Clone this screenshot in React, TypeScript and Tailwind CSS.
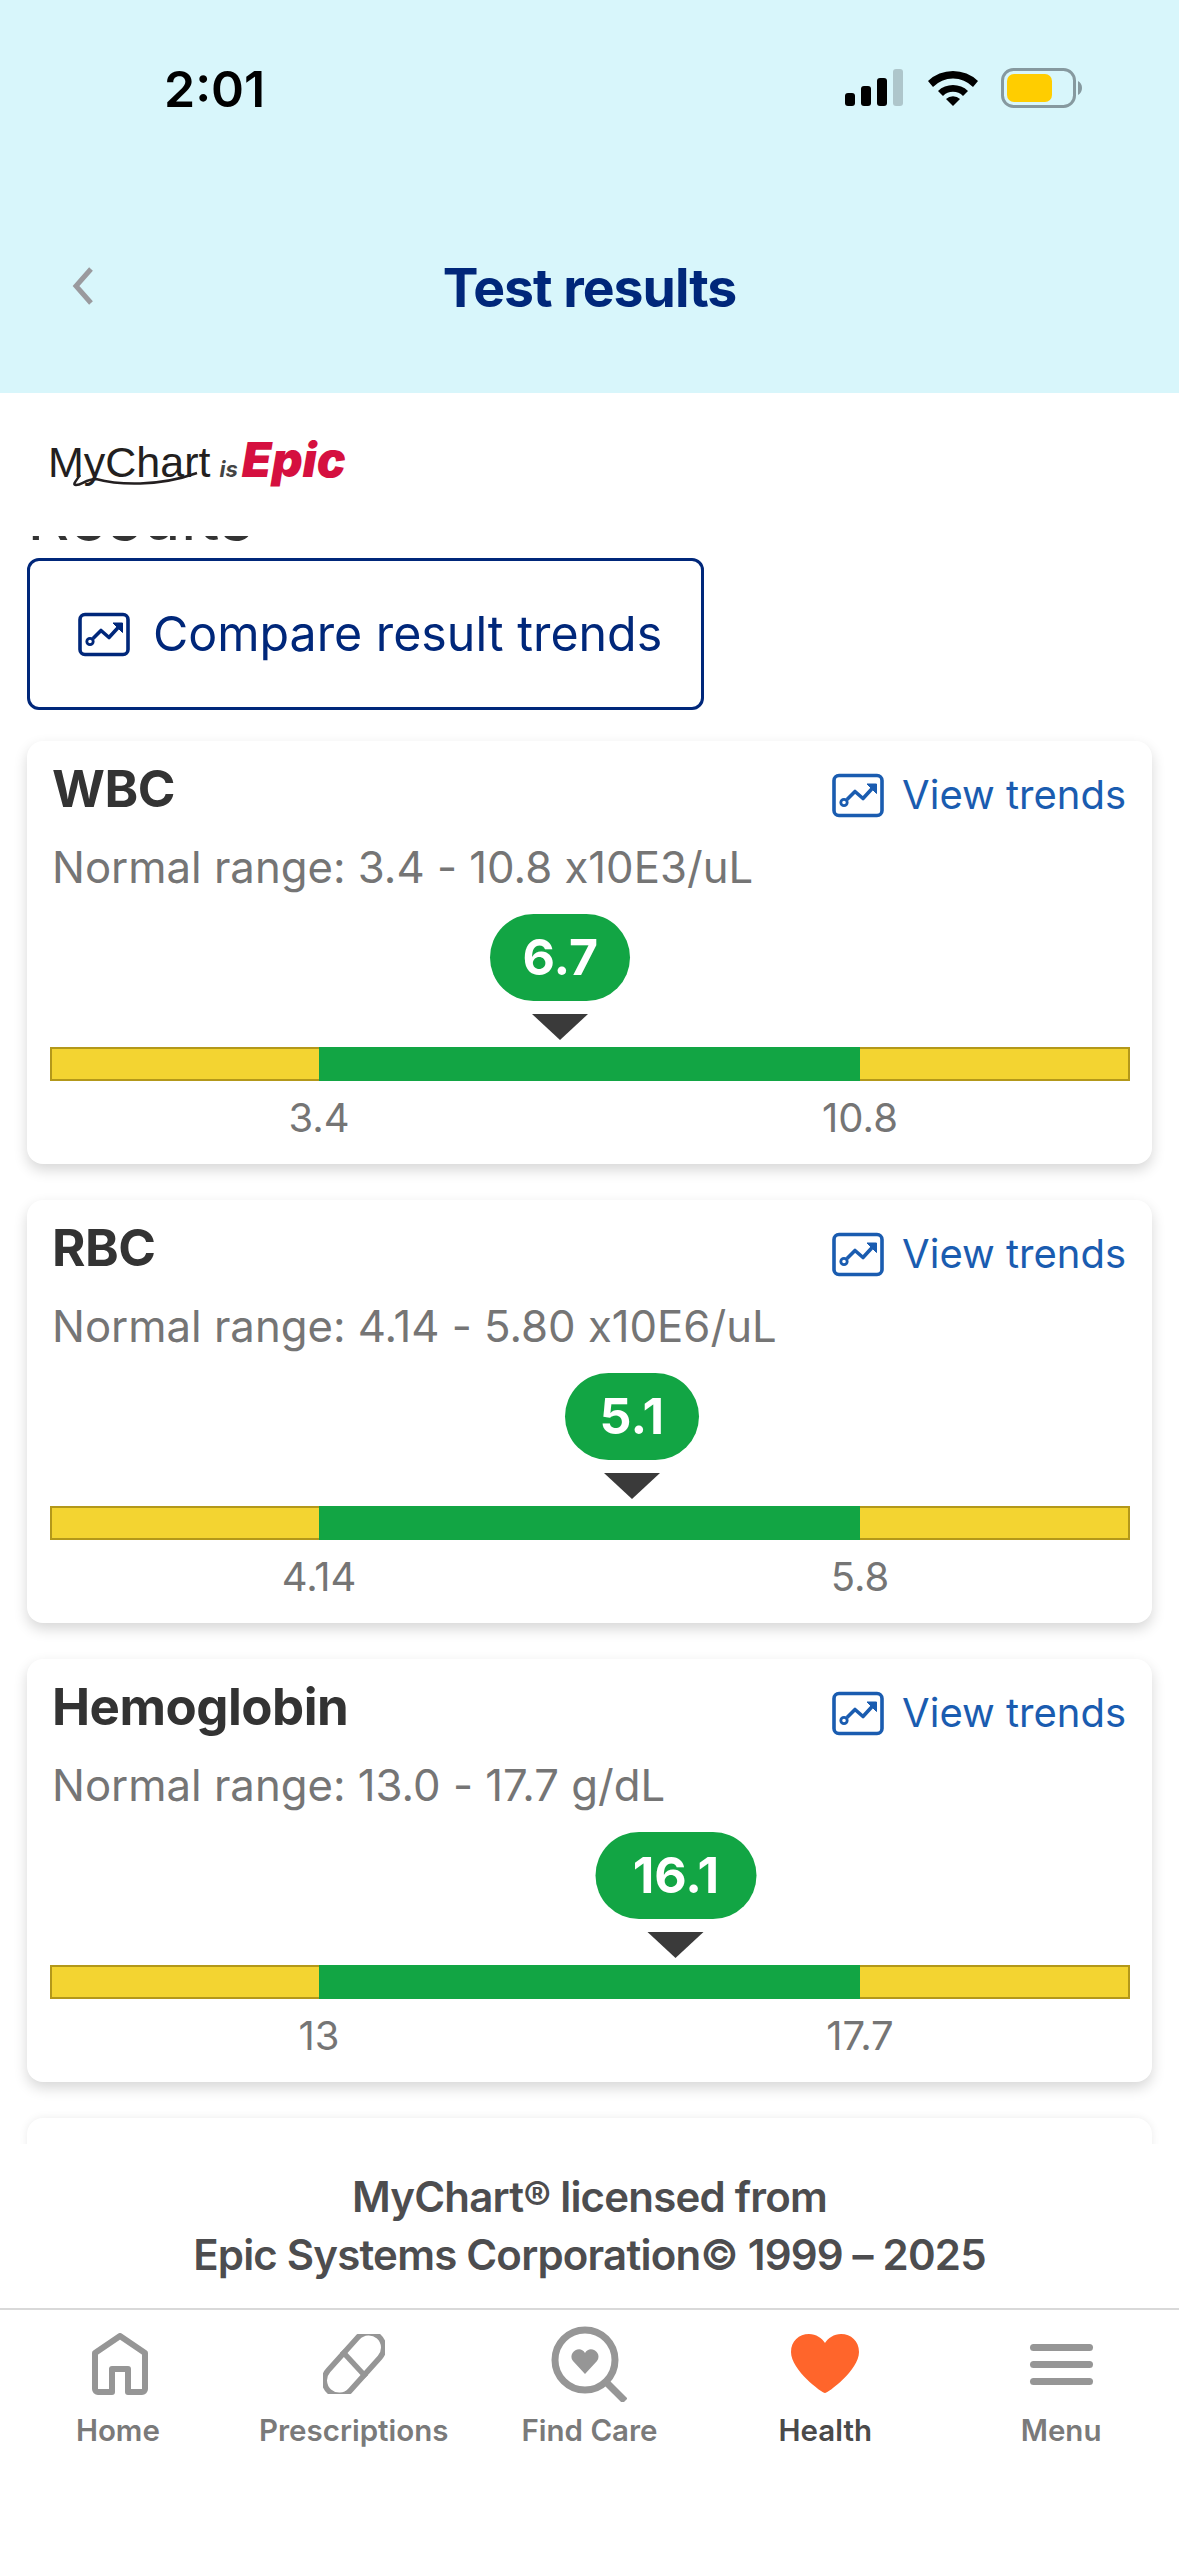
import React from "react";

const sans = "font-['Inter','Noto_Sans',sans-serif]";

function TrendIcon({ className }: { className?: string }) {
  return (
    <svg viewBox="0 0 52 44" fill="none" stroke="currentColor" className={className}>
      <rect x="2" y="2" width="48" height="40" rx="5" strokeWidth="3.6" />
      <circle cx="12" cy="29" r="3.2" strokeWidth="2.8" />
      <path d="M15 26l8-8 8 7 11-12" strokeWidth="3.6" strokeLinejoin="round" />
      <path d="M35 10.5h9.5v9.5z" fill="currentColor" strokeWidth="1" />
    </svg>
  );
}

const results = [
  { name: "WBC", range: "3.4 - 10.8 x10E3/uL", value: "6.7", low: 3.4, high: 10.8, lowLabel: "3.4", highLabel: "10.8", pill: "w-[140px]" },
  { name: "RBC", range: "4.14 - 5.80 x10E6/uL", value: "5.1", low: 4.14, high: 5.8, lowLabel: "4.14", highLabel: "5.8", pill: "w-[134px]" },
  { name: "Hemoglobin", range: "13.0 - 17.7 g/dL", value: "16.1", low: 13, high: 17.7, lowLabel: "13", highLabel: "17.7", pill: "w-[161px]" },
];

function ResultCard({ r }: { r: (typeof results)[number] }) {
  // the marker sits at the value's place inside the green band
  const pct = (parseFloat(r.value) - r.low) / (r.high - r.low);
  return (
    <div className="h-[423px] rounded-[16px] bg-white px-[23px] pt-[17px] shadow-[0_6px_14px_rgba(0,0,0,0.16)] [font-feature-settings:'calt'_0]">
      <div className="flex h-[64px] items-start justify-between pl-[2px] pr-[3px]">
        <div className="text-[51px] leading-[62px] font-bold tracking-[-0.5px] text-[#333333]">{r.name}</div>
        <div className="mt-[14px] flex items-center gap-[18px] text-[#1a5cb0]">
          <TrendIcon className="h-[45px] w-[52px]" />
          <span className="text-[40px] leading-[46px]">View trends</span>
        </div>
      </div>
      <div className="mt-[18px] pl-[2px] text-[43.7px] leading-[56px] text-[#757575]">Normal range: {r.range}</div>
      <div className="mt-[18px] h-[133px]" />
      <div className="relative flex h-[34px] w-[1080px] border-2 border-[#b3981a] bg-[#f3d431]">
        <div className="absolute top-[-2px] bottom-[-2px] left-[267px] w-[541px] bg-[#12a544]">
          <div className="absolute bottom-[34px] flex -translate-x-1/2 flex-col items-center" style={{ left: `${pct * 100}%` }}>
            <div className={`flex h-[87px] items-center justify-center rounded-[44px] bg-[#12a544] text-[50px] font-bold text-white ${r.pill}`}>{r.value}</div>
            <div className="mt-[13px] mb-[7px] h-0 w-0 border-x-[28px] border-t-[26px] border-x-transparent border-t-[#3a3a3a]" />
          </div>
          <div className="absolute top-[46px] left-0 -translate-x-1/2 text-[40px] leading-[50px] text-[#757575]">{r.lowLabel}</div>
          <div className="absolute top-[46px] right-0 translate-x-1/2 text-[40px] leading-[50px] text-[#757575]">{r.highLabel}</div>
        </div>
      </div>
    </div>
  );
}

function NavItem({ label, active, children }: { label: string; active?: boolean; children: React.ReactNode }) {
  return (
    <div className="flex w-[235.8px] flex-col items-center">
      <div className="flex h-[88px] items-center justify-center">{children}</div>
      <div className={`mt-[2px] text-[29.5px] leading-[40px] font-semibold ${active ? "text-[#4a4a4a]" : "text-[#7a7a7a]"}`}>{label}</div>
    </div>
  );
}

export default function App() {
  return (
    <div className={`flex h-[2556px] w-[1179px] flex-col overflow-hidden bg-white ${sans}`}>
      {/* header */}
      <div className="h-[393px] shrink-0 bg-[#d8f6fb]">
        <div className="flex h-[223px] items-start justify-between pt-[62px] pr-[96px] pl-[164px]">
          <div className="text-[50px] leading-[54px] font-semibold text-black">2:01</div>
          <div className="flex items-center gap-[22px] pt-[6px]">
            <svg width="60" height="38" viewBox="0 0 60 38">
              <rect x="0" y="24" width="10" height="13" rx="3" fill="#000" />
              <rect x="16" y="17" width="10" height="20" rx="3" fill="#000" />
              <rect x="32" y="9" width="10" height="28" rx="3" fill="#000" />
              <rect x="48" y="0" width="10" height="37" rx="3" fill="#aec6cb" />
            </svg>
            <svg width="52" height="38" viewBox="0 0 52 38">
              <path d="M1 12a36 36 0 0 1 50 0l-5 6a28 28 0 0 0-40 0z" fill="#000" />
              <path d="M11 22a22 22 0 0 1 30 0l-5 5a14 14 0 0 0-20 0z" fill="#000" />
              <path d="M19 30a10 10 0 0 1 14 0l-7 7z" fill="#000" />
            </svg>
            <svg width="82" height="40" viewBox="0 0 82 40">
              <rect x="1.5" y="1.5" width="72" height="37" rx="11" fill="none" stroke="#86999f" strokeWidth="3" />
              <rect x="6" y="6" width="45" height="28" rx="7" fill="#ffcd00" />
              <path d="M77 13a8 8 0 0 1 4 7 8 8 0 0 1-4 7z" fill="#86999f" />
            </svg>
          </div>
        </div>
        <div className="relative flex h-[130px] items-center justify-center">
          <svg className="absolute top-[44px] left-[72px]" width="22" height="38" viewBox="0 0 22 38" fill="none">
            <path d="M19 2L4 19l15 17" stroke="#9a9a9e" strokeWidth="5" />
          </svg>
          <div className="text-[53.5px] font-bold tracking-[-1px] text-[#00277a]">Test results</div>
        </div>
      </div>

      {/* logo */}
      <div className="flex h-[143px] shrink-0 items-start pt-[41px] pl-[48px]">
        <div className="relative flex items-baseline">
          <span className="font-['Liberation_Sans',sans-serif] text-[43px] leading-[52px] text-[#231f20]">MyChart</span>
          <span className="ml-[9px] text-[22px] font-bold text-[#444444] italic">is</span>
          <span className="ml-[4px] text-[48px] leading-[52px] font-black text-[#d5103f] italic">Epic</span>
          <svg className="absolute top-[37px] left-[20px]" width="136" height="20" viewBox="0 0 136 20" fill="none">
            <path d="M12 4C8 10 4 14 8 14c6 0 10-6 20-6 22 6 62 8 101-6" stroke="#231f20" strokeWidth="2.5" />
          </svg>
        </div>
      </div>

      {/* scrolled content */}
      <div className="min-h-0 flex-1 overflow-hidden px-[27px]">
        <div className="-mt-[53px] text-[66px] leading-[66px] text-[#333333]">Results</div>
        <div className="mt-[9px] flex h-[152px] w-[677px] items-center gap-[23px] rounded-[12px] border-[3px] border-[#00277a] pl-[48px] text-[#00277a]">
          <TrendIcon className="h-[45px] w-[52px]" />
          <span className="text-[48.3px] leading-[56px]">Compare result trends</span>
        </div>
        <div className="mt-[31px] flex flex-col gap-[36px]">
          {results.map((r) => (
            <ResultCard key={r.name} r={r} />
          ))}
          <div className="h-[423px] rounded-[16px] bg-white px-[26px] pt-[17px] shadow-[0_0_8px_rgba(0,0,0,0.08)]">
            <div className="text-[51px] leading-[62px] font-bold tracking-[-0.5px] text-[#333333]">Hematocrit</div>
          </div>
        </div>
      </div>

      {/* licence footer */}
      <div className="flex h-[166px] shrink-0 flex-col items-center justify-center border-b-2 border-[#d9d9d9] bg-white text-[42px] leading-[58px] font-semibold tracking-[-0.8px] text-[#4d4d4f]">
        <div>MyChart® licensed from</div>
        <div>Epic Systems Corporation© 1999 – 2025</div>
      </div>

      {/* tab bar */}
      <div className="flex h-[246px] shrink-0 items-start bg-white pt-[10px]">
        <NavItem label="Home">
          <svg className="ml-[5px]" width="56" height="62" viewBox="0 0 56 62" fill="none" stroke="#969696" strokeWidth="6">
            <path d="M3 20L28 3l25 17v36a3 3 0 0 1-3 3H36V36H20v23H6a3 3 0 0 1-3-3z" strokeLinejoin="round" />
          </svg>
        </NavItem>
        <NavItem label="Prescriptions">
          <svg width="62" height="60" viewBox="0 0 62 60" fill="none" stroke="#969696" strokeWidth="5.5">
            <rect x="16" y="-7" width="30" height="74" rx="15" transform="rotate(42 31 30)" />
            <path d="M19 17l24 26" />
          </svg>
        </NavItem>
        <NavItem label="Find Care">
          <svg width="76" height="76" viewBox="0 0 76 76" fill="none">
            <circle cx="34" cy="34" r="30" stroke="#969696" strokeWidth="7" />
            <path d="M55 56l19 19" stroke="#969696" strokeWidth="7" />
            <path d="M34 48L22 35c-6-8 7-17 12-8 5-9 18 0 12 8z" fill="#969696" />
          </svg>
        </NavItem>
        <NavItem label="Health" active>
          <svg width="68" height="60" viewBox="0 0 68 60">
            <path d="M34 59C31 59 0 36 0 18 0 7 8 0 18 0c7 0 13 4 16 9 3-5 9-9 16-9 10 0 18 7 18 18 0 18-31 41-34 41z" fill="#ff652b" />
          </svg>
        </NavItem>
        <NavItem label="Menu">
          <div className="flex w-[63px] flex-col gap-[10px]">
            <div className="h-[7px] rounded-full bg-[#969696]" />
            <div className="h-[7px] rounded-full bg-[#969696]" />
            <div className="h-[7px] rounded-full bg-[#969696]" />
          </div>
        </NavItem>
      </div>
    </div>
  );
}
